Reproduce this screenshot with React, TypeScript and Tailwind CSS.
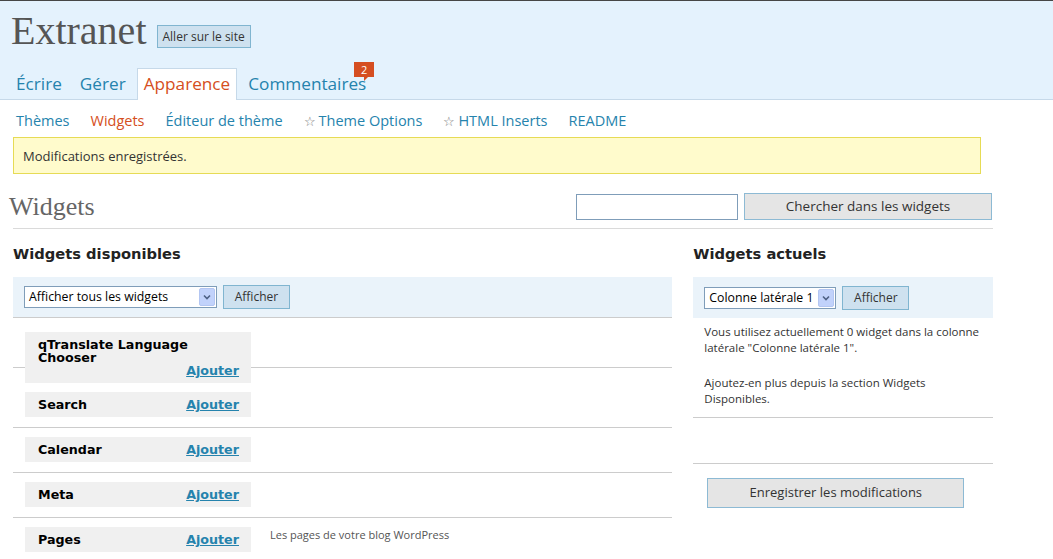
import React from 'react';

const sans = "font-['Open_Sans',sans-serif]";
const bold = "font-['DejaVu_Sans',sans-serif] font-bold";

const tabs = [
  { label: 'Écrire' },
  { label: 'Gérer' },
  { label: 'Apparence', active: true },
  { label: 'Commentaires', badge: '2' },
];

const subNav = [
  { label: 'Thèmes' },
  { label: 'Widgets', active: true },
  { label: 'Éditeur de thème' },
  { label: 'Theme Options', star: true },
  { label: 'HTML Inserts', star: true },
  { label: 'README' },
];

// rows keep a fixed height; the first box is taller and spills into the next row
const widgets = [
  { name: 'qTranslate Language Chooser', row: 'h-[50px] pt-[14px]' },
  { name: 'Search', row: 'h-[60px] pt-[24px]' },
  { name: 'Calendar', row: 'h-[45px] pt-[9px]' },
  { name: 'Meta', row: 'h-[45px] pt-[9px]' },
  { name: 'Pages', row: 'h-[45px] pt-[9px]', desc: 'Les pages de votre blog WordPress' },
];

function FakeSelect({ label, width }: { label: string; width: string }) {
  return (
    <div className={`${width} h-[22px] border border-[#7f9db9] bg-white flex items-center justify-between pl-[4px] pr-px`}>
      <span className="text-[12.3px] text-black leading-[20px] whitespace-nowrap">{label}</span>
      <span className="w-[16px] h-[18px] rounded-[2px] bg-[#c1d2fb] border border-[#b3c6f2] flex items-center justify-center">
        <svg width="8" height="6" viewBox="0 0 8 6">
          <path d="M1 1.5 L4 4.5 L7 1.5" fill="none" stroke="#4d6185" strokeWidth="1.6" />
        </svg>
      </span>
    </div>
  );
}

export default function App() {
  return (
    <div className={`${sans} h-[559px] overflow-hidden bg-white text-[#333]`}>
      <div className="border-t border-[#464646] border-b border-b-[#c6d9e9] bg-[#e4f2fd]">
        <div className="flex items-start pl-[11px] pt-[10px]">
          <h1 className="font-['Liberation_Serif',serif] text-[40px] leading-[40px] text-[#555]">Extranet</h1>
          <a className="ml-[10px] mt-[14px] h-[23px] px-[5px] border border-[#80b5d0] bg-[#cee1ef] text-[12px] leading-[21px] text-[#333]">
            Aller sur le site
          </a>
        </div>
        <ul className="flex items-end h-[31px] mt-[17px] pl-[9px]">
          {tabs.map(tab => (
            <li
              key={tab.label}
              className={`relative mr-[4px] px-[6px] text-[17.2px] leading-[30px] border border-b-0 ${
                tab.active
                  ? 'h-[32px] -mb-px bg-white border-[#c6d9e9] text-[#d54e21]'
                  : 'h-[31px] border-transparent text-[#2583ad]'
              }`}
            >
              {tab.label}
              {tab.badge && (
                <span className="absolute left-[112px] top-[-7px] w-[20px] h-[15px] bg-[#d54e21] text-white text-[11px] leading-[15px] text-center">
                  {tab.badge}
                  <span className="absolute left-[10px] top-[15px] w-0 h-0 border-l-[4px] border-l-[#d54e21] border-b-[4px] border-b-transparent" />
                </span>
              )}
            </li>
          ))}
        </ul>
      </div>

      <ul className="flex items-center h-[37px] pt-[4px] pl-[16px] gap-[21px] text-[14.5px]">
        {subNav.map(item => (
          <li key={item.label} className={item.active ? 'text-[#d54e21]' : 'text-[#2583ad]'}>
            {item.star && <span className="text-[13px] text-[#777] mr-[3px]">☆</span>}
            {item.label}
          </li>
        ))}
      </ul>

      <div className="ml-[13px] w-[968px] h-[37px] border border-[#e6db55] bg-[#fffbcc] px-[9px] pt-[2px] flex items-center text-[13px] text-[#333]">
        Modifications enregistrées.
      </div>

      <div className="ml-[13px] w-[980px]">
        <div className="flex items-center justify-between mt-[19px] h-[27px]">
          <h2 className="-ml-[4px] font-['Liberation_Serif',serif] text-[26px] leading-[27px] text-[#666]">Widgets</h2>
          <div className="flex items-center gap-[6px] pr-[1px]">
            <input className="w-[162px] h-[26px] border border-[#7f9db9] bg-white" />
            <button className="w-[248px] h-[27px] border border-[#8dbad4] bg-[#e5e5e5] text-[13.5px] text-[#333]">
              Chercher dans les widgets
            </button>
          </div>
        </div>
        <div className="mt-[8px] border-t border-[#dadada]" />

        <div className="flex gap-[21px]">
          <div className="w-[660px]">
            <h3 className={`${bold} mt-[16px] mb-[14px] text-[14.7px] leading-[18px] text-[#222]`}>Widgets disponibles</h3>
            <div className="h-[41px] bg-[#eaf3fa] border-b border-[#ccc] flex items-center px-[11px] gap-[6px]">
              <FakeSelect label="Afficher tous les widgets" width="w-[193px]" />
              <button className="w-[67px] h-[24px] border border-[#80b5d0] bg-[#cee1ef] text-[12px] text-[#333]">Afficher</button>
            </div>
            {widgets.map(w => (
              <div key={w.name} className={`${w.row} border-b border-[#ccc]`}>
                <div className="flex items-start">
                  <div className="ml-[12px] w-[226px] bg-[#f0f0f0] pl-[13px] pr-[12px] pt-[6px] pb-[6px] flex flex-wrap items-center">
                    <span className={`${bold} text-[12.7px] leading-[13px] text-black`}>{w.name}</span>
                    <a className={`${bold} ml-auto text-[12.7px] leading-[13px] text-[#2583ad] underline`}>Ajouter</a>
                  </div>
                  {w.desc && <p className="ml-[19px] mt-px text-[11px] leading-[13px] text-[#555]">{w.desc}</p>}
                </div>
              </div>
            ))}
          </div>

          <div className="w-[300px]">
            <h3 className={`${bold} mt-[16px] mb-[14px] text-[14.7px] leading-[18px] text-[#222]`}>Widgets actuels</h3>
            <div className="h-[41px] bg-[#eaf3fa] flex items-center px-[11px] gap-[6px]">
              <FakeSelect label="Colonne latérale 1" width="w-[132px]" />
              <button className="w-[67px] h-[24px] border border-[#80b5d0] bg-[#cee1ef] text-[12px] text-[#333]">Afficher</button>
            </div>
            <div className="px-[11px] pt-[6px] pb-[10px] border-b border-[#ccc] text-[11.5px] leading-[16px] text-[#333]">
              <p>Vous utilisez actuellement 0 widget dans la colonne latérale "Colonne latérale 1".</p>
              <p className="mt-[19px]">Ajoutez-en plus depuis la section Widgets Disponibles.</p>
            </div>
            <div className="h-[46px] border-b border-[#ccc]" />
            <button className="ml-[14px] mt-[14px] w-[257px] h-[30px] border border-[#8dbad4] bg-[#e5e5e5] text-[13px] text-[#333]">
              Enregistrer les modifications
            </button>
          </div>
        </div>
      </div>
    </div>
  );
}
